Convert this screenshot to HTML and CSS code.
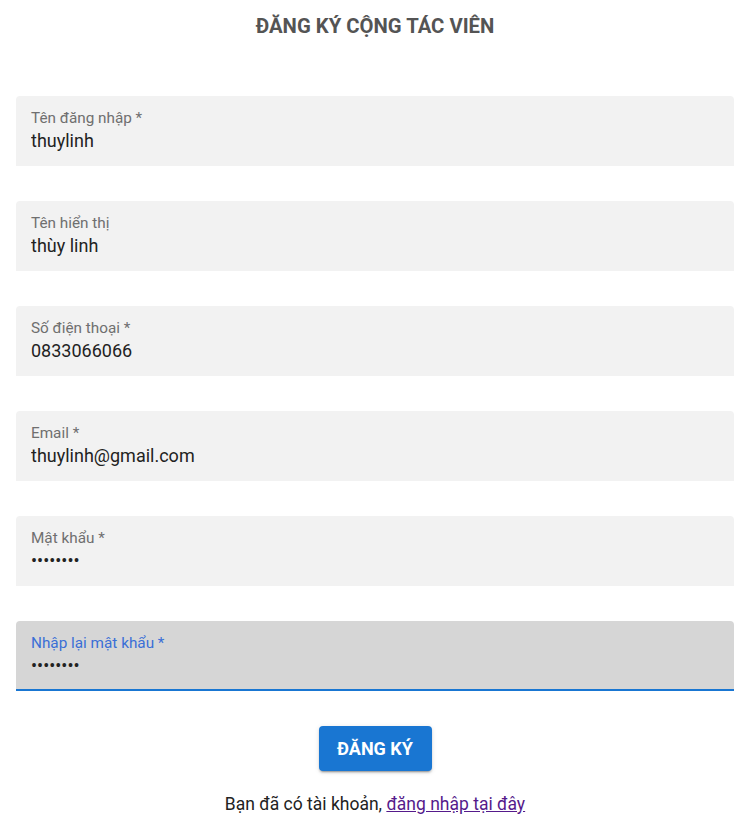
FILE: index.html
```html
<!DOCTYPE html>
<html lang="vi">
<head>
<meta charset="utf-8">
<title>Đăng ký cộng tác viên</title>
<link rel="stylesheet" href="styles.css">
</head>
<body>
<div class="page">
  <h1 class="title">ĐĂNG KÝ CỘNG TÁC VIÊN</h1>
  <form class="form">
    <label class="field">
      <span class="field-label">Tên đăng nhập *</span>
      <input class="field-input" type="text" value="thuylinh">
    </label>
    <label class="field">
      <span class="field-label">Tên hiển thị</span>
      <input class="field-input" type="text" value="thùy linh">
    </label>
    <label class="field">
      <span class="field-label">Số điện thoại *</span>
      <input class="field-input" type="text" value="0833066066">
    </label>
    <label class="field">
      <span class="field-label">Email *</span>
      <input class="field-input" type="text" value="thuylinh@gmail.com">
    </label>
    <label class="field">
      <span class="field-label">Mật khẩu *</span>
      <input class="field-input" type="password" value="12345678">
    </label>
    <label class="field field-focused">
      <span class="field-label">Nhập lại mật khẩu *</span>
      <input class="field-input" type="password" value="12345678">
    </label>
    <div class="actions">
      <button class="btn" type="button">ĐĂNG KÝ</button>
    </div>
    <p class="login-text">Bạn đã có tài khoản, <a class="login-link" href="#">đăng nhập tại đây</a></p>
  </form>
</div>
</body>
</html>
```
FILE: styles.css
```css
html, body {
  margin: 0;
  padding: 0;
  background: #ffffff;
}
body {
  font-family: Roboto, "Liberation Sans", Arial, sans-serif;
  color: #222222;
}
.page {
  padding: 0 14px 0 16px;
}
.title {
  margin: 0;
  padding-top: 14px;
  font-size: 20.3px;
  line-height: 24px;
  font-weight: 700;
  color: #545454;
  text-align: center;
}
.form {
  margin-top: 58px;
  display: flex;
  flex-direction: column;
  gap: 35px;
}
.field {
  display: flex;
  flex-direction: column;
  gap: 3px;
  height: 70px;
  box-sizing: border-box;
  padding: 14px 15px 0;
  background: #f2f2f2;
  border-radius: 4px 4px 0 0;
  cursor: text;
}
.field-label {
  font-size: 15.3px;
  line-height: 17px;
  color: #6f6f6f;
}
.field-input {
  border: 0;
  outline: 0;
  background: transparent;
  padding: 0;
  margin: 0;
  font-family: inherit;
  font-size: 18px;
  line-height: 22px;
  height: 22px;
  color: #222222;
  width: 100%;
}
.field-focused {
  background: #d6d6d6;
  border-bottom: 2px solid #1976d2;
}
.field-focused .field-label {
  color: #3a6fd6;
}
.actions {
  display: flex;
  justify-content: center;
}
.btn {
  width: 113px;
  height: 45px;
  border: 0;
  border-radius: 4px;
  background: #1976d2;
  color: #ffffff;
  font-family: inherit;
  font-weight: 700;
  font-size: 18px;
  box-shadow: 0 3px 1px -2px rgba(0,0,0,0.2), 0 2px 2px 0 rgba(0,0,0,0.14), 0 1px 5px 0 rgba(0,0,0,0.12);
  cursor: pointer;
}
.login-text {
  margin: -14px 0 0;
  text-align: center;
  font-size: 17.5px;
  line-height: 24px;
  color: #222222;
}
.login-link {
  color: #551a8b;
}
```
